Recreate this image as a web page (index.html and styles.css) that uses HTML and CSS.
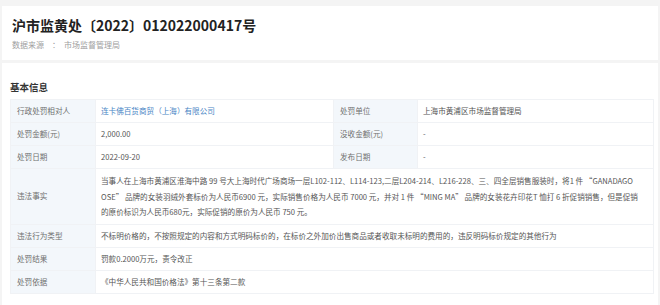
FILE: index.html
```html
<!DOCTYPE html>
<html lang="zh">
<head>
<meta charset="utf-8">
<link rel="stylesheet" href="styles.css">
</head>
<body>
<div class="page">
  <section class="card head">
    <h1 class="title">沪市监黄处〔2022〕012022000417号</h1>
    <div class="source"><span>数据来源</span><span class="colon">：</span><span>市场监督管理局</span></div>
  </section>
  <section class="card info">
    <h2 class="sect">基本信息</h2>
    <div class="grid">
      <div class="lab">行政处罚相对人</div>
      <div class="val"><span class="link">连卡佛百货商贸（上海）有限公司</span></div>
      <div class="lab">处罚单位</div>
      <div class="val">上海市黄浦区市场监督管理局</div>

      <div class="lab">处罚金额(元)</div>
      <div class="val">2,000.00</div>
      <div class="lab">没收金额(元)</div>
      <div class="val">-</div>

      <div class="lab">处罚日期</div>
      <div class="val">2022-09-20</div>
      <div class="lab">发布日期</div>
      <div class="val">-</div>

      <div class="lab">违法事实</div>
      <div class="val wide fact">当事人在上海市黄浦区淮海中路 99 号大上海时代广场商场一层L102-112、L114-123,二层L204-214、L216-228、三、四全层销售服装时，将1 件 “GANADAGO<br>OSE” 品牌的女装羽绒外套标价为人民币6900 元，实际销售价格为人民币 7000 元，并对 1 件 “MING MA” 品牌的女装花卉印花T 恤打 6 折促销销售，但是促销<br>的原价标识为人民币680元，实际促销的原价为人民币 750 元。</div>

      <div class="lab">违法行为类型</div>
      <div class="val wide">不标明价格的，不按照规定的内容和方式明码标价的，在标价之外加价出售商品或者收取未标明的费用的，违反明码标价规定的其他行为</div>

      <div class="lab">处罚结果</div>
      <div class="val wide">罚款0.2000万元，责令改正</div>

      <div class="lab">处罚依据</div>
      <div class="val wide">《中华人民共和国价格法》第十三条第二款</div>
    </div>
  </section>
</div>
</body>
</html>
```

FILE: styles.css
```css
* { box-sizing: border-box; }
html, body { margin: 0; padding: 0; }
body {
  background: #f4f4f4;
  font-family: "Noto Sans CJK SC", "Noto Sans", sans-serif;
  color: #555;
}
.page {
  padding: 6px 2px 0 2px;
  display: flex;
  flex-direction: column;
  gap: 3px;
}
.card { background: #fff; }
.head { padding: 9px 10px 9px 10px; }
.title {
  margin: 0;
  font-size: 14px;
  line-height: 20px;
  font-weight: 700;
  color: #222;
}
.source {
  margin-top: 4px;
  font-size: 8px;
  line-height: 12px;
  color: #a0a0a0;
  display: flex;
}
.source .colon { margin: 0 4px 0 8px; }
.info { padding: 17px 2px 12px 8px; }
.sect {
  margin: 0 0 5px 0;
  font-size: 9.5px;
  line-height: 14px;
  font-weight: 700;
  color: #333;
}
.grid {
  display: grid;
  grid-template-columns: 85px 238px 84px 1fr;
  border-top: 1px solid #f0f2f5;
  border-left: 1px solid #f0f2f5;
  margin-right: 2px;
}
.lab, .val {
  border-right: 1px solid #f0f2f5;
  border-bottom: 1px solid #f0f2f5;
  min-height: 23px;
  display: flex;
  align-items: center;
  font-size: 7.6px;
  line-height: 12px;
  padding: 0 6px;
}
.lab { background: #f3f7fb; color: #707070; }
.val { color: #555; padding-left: 5px; }
.wide { grid-column: 2 / 5; }
.fact {
  display: block;
  line-height: 15.5px;
  padding-top: 4px;
  padding-bottom: 4px;
  white-space: nowrap;
}
.link { color: #4a86c5; }
```
